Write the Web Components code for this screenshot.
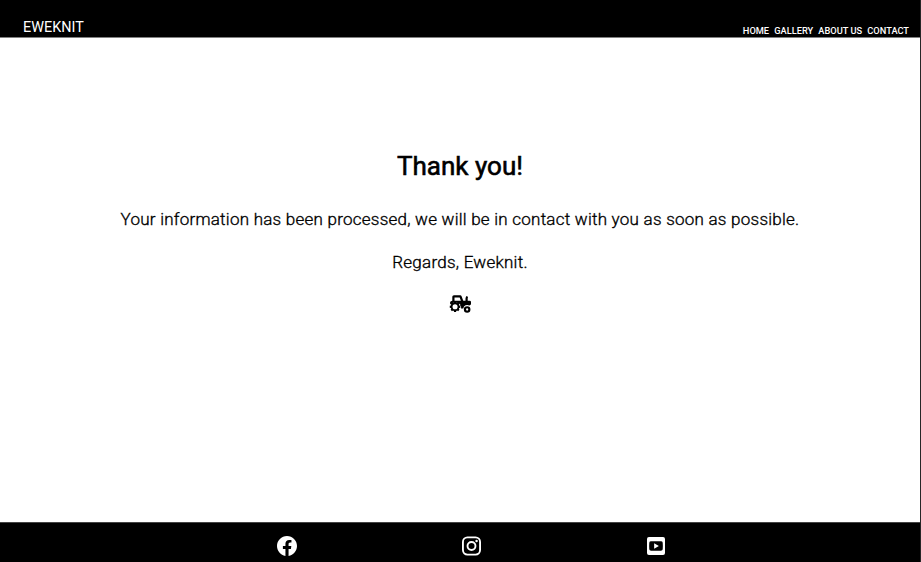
<!DOCTYPE html>
<html lang="en">
<head>
<meta charset="utf-8">
<title>Eweknit</title>
<style>
html,body{margin:0;height:100%}
body{font-family:Roboto,"Liberation Sans",sans-serif;background:#fff;color:#000;overflow:hidden}
</style>
</head>
<body>
<ewe-page>
  <ewe-header slot="header">EWEKNIT</ewe-header>
  <ewe-message>
    <span slot="title">Thank you!</span>
    <span slot="body">Your information has been processed, we will be in contact with you as soon as possible.</span>
    <span slot="sign">Regards, Eweknit.</span>
  </ewe-message>
  <ewe-footer slot="footer"></ewe-footer>
</ewe-page>
<script>
const define = (name, html) => customElements.define(name, class extends HTMLElement {
  constructor() {
    super();
    this.attachShadow({mode: 'open'}).innerHTML = html;
  }
});

define('ewe-page', `<style>
:host{display:grid;grid-template-rows:38px 1fr 40px;height:100vh;box-sizing:border-box;border-right:1px solid #272727}
</style><slot name="header"></slot><slot></slot><slot name="footer"></slot>`);

define('ewe-header', `<style>
:host{display:flex;justify-content:space-between;align-items:flex-end;box-sizing:border-box;background:#000;color:#fff;border-bottom:1px solid #808080;padding:0 11px 0 23px;font-size:14.4px;line-height:16px}
.brand{padding-bottom:1px}
nav{display:flex;gap:5.2px;font-size:9.25px;font-weight:500;line-height:11px;padding-bottom:1px}
</style><span class="brand"><slot></slot></span>
<nav><ewe-link>HOME</ewe-link><ewe-link>GALLERY</ewe-link><ewe-link>ABOUT US</ewe-link><ewe-link>CONTACT</ewe-link></nav>`);

define('ewe-link', `<style>:host{display:block;white-space:nowrap}</style><slot></slot>`);

define('ewe-message', `<style>
:host{display:flex;flex-direction:column;align-items:center;padding-top:112px;white-space:nowrap}
h1{margin:0;font-size:26px;line-height:32px;font-weight:400;-webkit-text-stroke:.6px currentColor}
p{margin:0;font-size:17px;line-height:20px;font-weight:300;letter-spacing:.24px;-webkit-text-stroke:.35px currentColor}
.body{margin-top:27px}
.sign{margin-top:23px}
ewe-icon{margin:23px 1px 0 0;width:22px;height:18px}
</style>
<h1><slot name="title"></slot></h1>
<p class="body"><slot name="body"></slot></p>
<p class="sign"><slot name="sign"></slot></p>
<ewe-icon name="tractor"></ewe-icon>`);

define('ewe-footer', `<style>
:host{display:flex;justify-content:center;align-items:center;box-sizing:border-box;background:#000;color:#fff;border-top:1px solid #444;padding:6px 0 0 22px}
ewe-icon{height:20px}
.fb{width:20px;margin-right:165px}.ig{width:19px;margin-right:166px}.yt{width:18px}
</style>
<ewe-icon class="fb" name="facebook"></ewe-icon><ewe-icon class="ig" name="instagram"></ewe-icon><ewe-icon class="yt" name="video"></ewe-icon>`);

const icons = {
  facebook: ['8 8 496 496', '<path fill="currentColor" d="M504 256C504 119 393 8 256 8S8 119 8 256c0 123.78 90.69 226.38 209.25 245V327.69h-63V256h63v-54.64c0-62.15 37-96.48 93.67-96.48 27.14 0 55.52 4.84 55.52 4.84v61h-31.28c-30.8 0-40.41 19.12-40.41 38.73V256h68.78l-11 71.69h-57.78V501C413.31 482.38 504 379.78 504 256z"/>'],
  instagram: ['0 32 448 448', '<g fill="none" stroke="currentColor" stroke-width="44"><rect x="22" y="54" width="404" height="404" rx="106"/><circle cx="224" cy="256" r="94"/></g><circle cx="343.7" cy="136.4" r="29" fill="currentColor"/>'],
  video: ['0 32 448 448', '<path fill="currentColor" fill-rule="evenodd" d="M48 32H400A48 48 0 0 1 448 80V432A48 48 0 0 1 400 480H48A48 48 0 0 1 0 432V80A48 48 0 0 1 48 32ZM100 140Q61 140 57 174Q50 256 57 338Q61 372 100 372Q224 382 348 372Q387 372 391 338Q398 256 391 174Q387 140 348 140Q224 130 100 140ZM178 190L296 256L178 322Z"/>'],
  tractor: ['0 0 640 512', '<path fill="currentColor" fill-rule="evenodd" d="M144 0H329Q354 0 363 23L415 160H480V99Q480 65 503 31Q511 20 523 29L548 48Q558 56 550 67Q544 78 544 99V160H600Q640 160 640 200V247Q640 271 621 284L592 303A114 114 0 0 0 416 384H351V320L320 304L337 284L284 231L256 248L240 216H112L96 248L72 231L32 270V208Q32 184 56 176L96 160V48Q96 0 144 0ZM160 64V160H346L310 64Z"/><path fill="currentColor" fill-rule="evenodd" d="M148 184H204L212 215L237 225L265 208L304 247L287 275L298 300L330 308V364L298 372L287 397L304 425L265 464L237 447L212 457L204 490H148L140 457L115 447L87 464L48 425L65 397L54 372L22 364V308L54 300L65 275L48 247L87 208L115 225L140 215ZM176 262A74 74 0 1 0 176 410A74 74 0 1 0 176 262Z"/><path fill="currentColor" fill-rule="evenodd" d="M528 320A96 96 0 1 0 528 512A96 96 0 1 0 528 320ZM528 383A33 33 0 1 1 528 449A33 33 0 1 1 528 383Z"/>']
};
customElements.define('ewe-icon', class extends HTMLElement {
  constructor() { super(); this.attachShadow({mode: 'open'}); }
  connectedCallback() {
    const [box, art] = icons[this.getAttribute('name')];
    this.shadowRoot.innerHTML = `<style>:host{display:block}svg{display:block;width:100%;height:100%}</style><svg viewBox="${box}" aria-hidden="true">${art}</svg>`;
  }
});
</script>
</body>
</html>
